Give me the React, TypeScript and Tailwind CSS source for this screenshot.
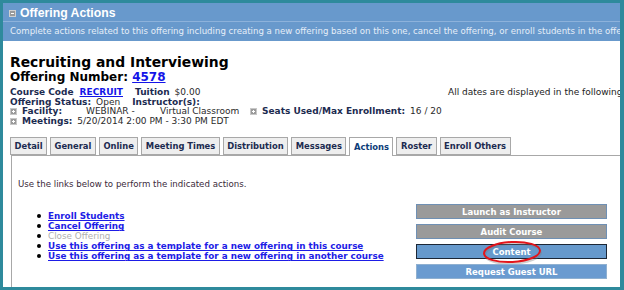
const tabs = [
  "Detail",
  "General",
  "Online",
  "Meeting Times",
  "Distribution",
  "Messages",
  "Actions",
  "Roster",
  "Enroll Others",
];

const links = [
  { label: "Enroll Students", on: true },
  { label: "Cancel Offering", on: true },
  { label: "Close Offering", on: false },
  { label: "Use this offering as a template for a new offering in this course", on: true },
  { label: "Use this offering as a template for a new offering in another course", on: true },
];

const PlusBox = () => (
  <span className="inline-block w-[7px] h-[7px] bg-[#9a9a9a] border border-[#c8c8c8] relative mr-[5px]">
    <span className="absolute left-[1px] top-[2px] w-[3px] h-px bg-white" />
    <span className="absolute left-[2px] top-[1px] w-px h-[3px] bg-white" />
  </span>
);

const Label = ({ children }: { children: React.ReactNode }) => (
  <span className="font-bold text-[#1c2b50]">{children}</span>
);

const App = () => {
  return (
    <div className="w-[624px] h-[290px] bg-[#2e8a9c] pt-[3px] pl-[3px] pr-[4px] pb-[3px] font-['DejaVu_Sans',Verdana,sans-serif] overflow-hidden">
      <div className="h-full flex flex-col bg-white overflow-hidden">
        <div className="h-[38px] bg-[#6899cc] shrink-0 flex flex-col">
          <div className="flex items-center h-[18px] pl-[6px] pt-[3px]">
            <span className="inline-block w-[7px] h-[7px] bg-[#9a9a9a] border border-[#d0d0d0] relative mr-[4px]">
              <span className="absolute left-[1px] top-[2px] w-[3px] h-px bg-white" />
            </span>
            <span className="text-white font-bold text-[12.25px] leading-none font-['Liberation_Sans',Arial,sans-serif]">
              Offering Actions
            </span>
          </div>
          <div className="h-px bg-[#8db2db]" />
          <div className="pl-[7px] pt-[3px] text-[8.6px] leading-[12px] text-[#e6eef8] whitespace-nowrap">
            Complete actions related to this offering including creating a new offering based on this one, cancel the offering, or enroll students in the offering
          </div>
        </div>

        <div className="flex-1 flex flex-col pl-[6px] pt-[13px] relative">
          <div className="font-bold text-[13.9px] leading-[16px] text-black pl-[1px]">Recruiting and Interviewing</div>
          <div className="font-bold text-[12px] leading-[15px] text-black pl-[1px]">
            Offering Number: <span className="text-[#1414e8] underline">4578</span>
          </div>

          <div className="mt-[3px] pl-[1px] text-[9px] leading-[9.6px] text-[#2a2a2a] whitespace-nowrap">
            <div className="flex">
              <Label>Course Code</Label>
              <span className="ml-[6px] font-bold text-[#1414e8] underline">RECRUIT</span>
              <span className="ml-[12px]"><Label>Tuition</Label></span>
              <span className="ml-[5px]">$0.00</span>
              <span className="ml-auto w-[172px] text-[#222]">All dates are displayed in the following format</span>
            </div>
            <div className="flex">
              <Label>Offering Status:</Label>
              <span className="ml-[5px]">Open</span>
              <span className="ml-[12px]"><Label>Instructor(s):</Label></span>
            </div>
            <div className="flex items-center">
              <PlusBox />
              <span className="w-[64px]"><Label>Facility:</Label></span>
              <span className="w-[74px]">WEBINAR -</span>
              <span className="w-[90px]">Virtual Classroom</span>
              <PlusBox />
              <Label>Seats Used/Max Enrollment:</Label>
              <span className="ml-[5px]">16 / 20</span>
            </div>
            <div className="flex items-center">
              <PlusBox />
              <Label>Meetings:</Label>
              <span className="ml-[5px]">5/20/2014 2:00 PM - 3:30 PM EDT</span>
            </div>
          </div>

          <div className="mt-[11px] flex items-end gap-[3px] pl-[1px] relative">
            {tabs.map((t) => {
              const active = t === "Actions";
              return (
                <div
                  key={t}
                  className={
                    active
                      ? "h-[19px] px-[3.5px] border border-b-0 border-[#a8a8a8] bg-white text-[#0d3c78] font-bold text-[8.4px] flex items-center relative z-10 -mb-px pb-px"
                      : "h-[18px] px-[3.5px] border border-[#a8a8a8] bg-[#eeeeee] text-[#1c2b50] font-bold text-[8.4px] flex items-center"
                  }
                >
                  {t}
                </div>
              );
            })}
          </div>

          <div className="flex-1 border-l border-t border-[#a8a8a8] ml-[2px] pl-[6px] pt-[22px] relative">
            <div className="text-[8.65px] leading-[12px] text-[#3a2a3a]">Use the links below to perform the indicated actions.</div>

            <ul className="mt-[21px] pl-[30px] text-[8.8px] leading-[10px]">
              {links.map((l) => (
                <li key={l.label} className="flex items-center">
                  <span className="w-[4px] h-[4px] rounded-full bg-black mr-[7px] -ml-[11px] shrink-0" />
                  <span className={l.on ? "font-bold text-[#1d1de6] underline" : "text-[#b0b0b0]"}>
                    {l.label}
                  </span>
                </li>
              ))}
            </ul>

            <div className="absolute left-[404px] top-[48px] w-[191px] flex flex-col gap-[5px]">
              <div className="h-[15px] bg-[#9a9a9a] border border-[#6f90b4] text-white font-bold text-[8.5px] flex items-center justify-center">
                Launch as Instructor
              </div>
              <div className="h-[15px] bg-[#9a9a9a] border border-[#6f90b4] text-white font-bold text-[8.5px] flex items-center justify-center">
                Audit Course
              </div>
              <div className="h-[15px] bg-[#6699cc] border-[1.5px] border-[#1c2736] text-white font-bold text-[8.5px] flex items-center justify-center relative">
                Content
                <svg className="absolute left-[65px] -top-[5px]" width="60" height="24" viewBox="0 0 60 24">
                  <ellipse cx="30" cy="12.6" rx="28" ry="10" fill="none" stroke="#777" strokeOpacity="0.35" strokeWidth="2" transform="rotate(-3 30 12) translate(0.8 1.2)" />
                  <ellipse cx="30" cy="12" rx="28" ry="10" fill="none" stroke="#e3151b" strokeWidth="2" transform="rotate(-3 30 12)" />
                </svg>
              </div>
              <div className="h-[15px] bg-[#6a9bd0] border border-[#8fb0d0] text-white font-bold text-[8.5px] flex items-center justify-center">
                Request Guest URL
              </div>
            </div>
          </div>
        </div>
      </div>
    </div>
  );
};

export default App;
